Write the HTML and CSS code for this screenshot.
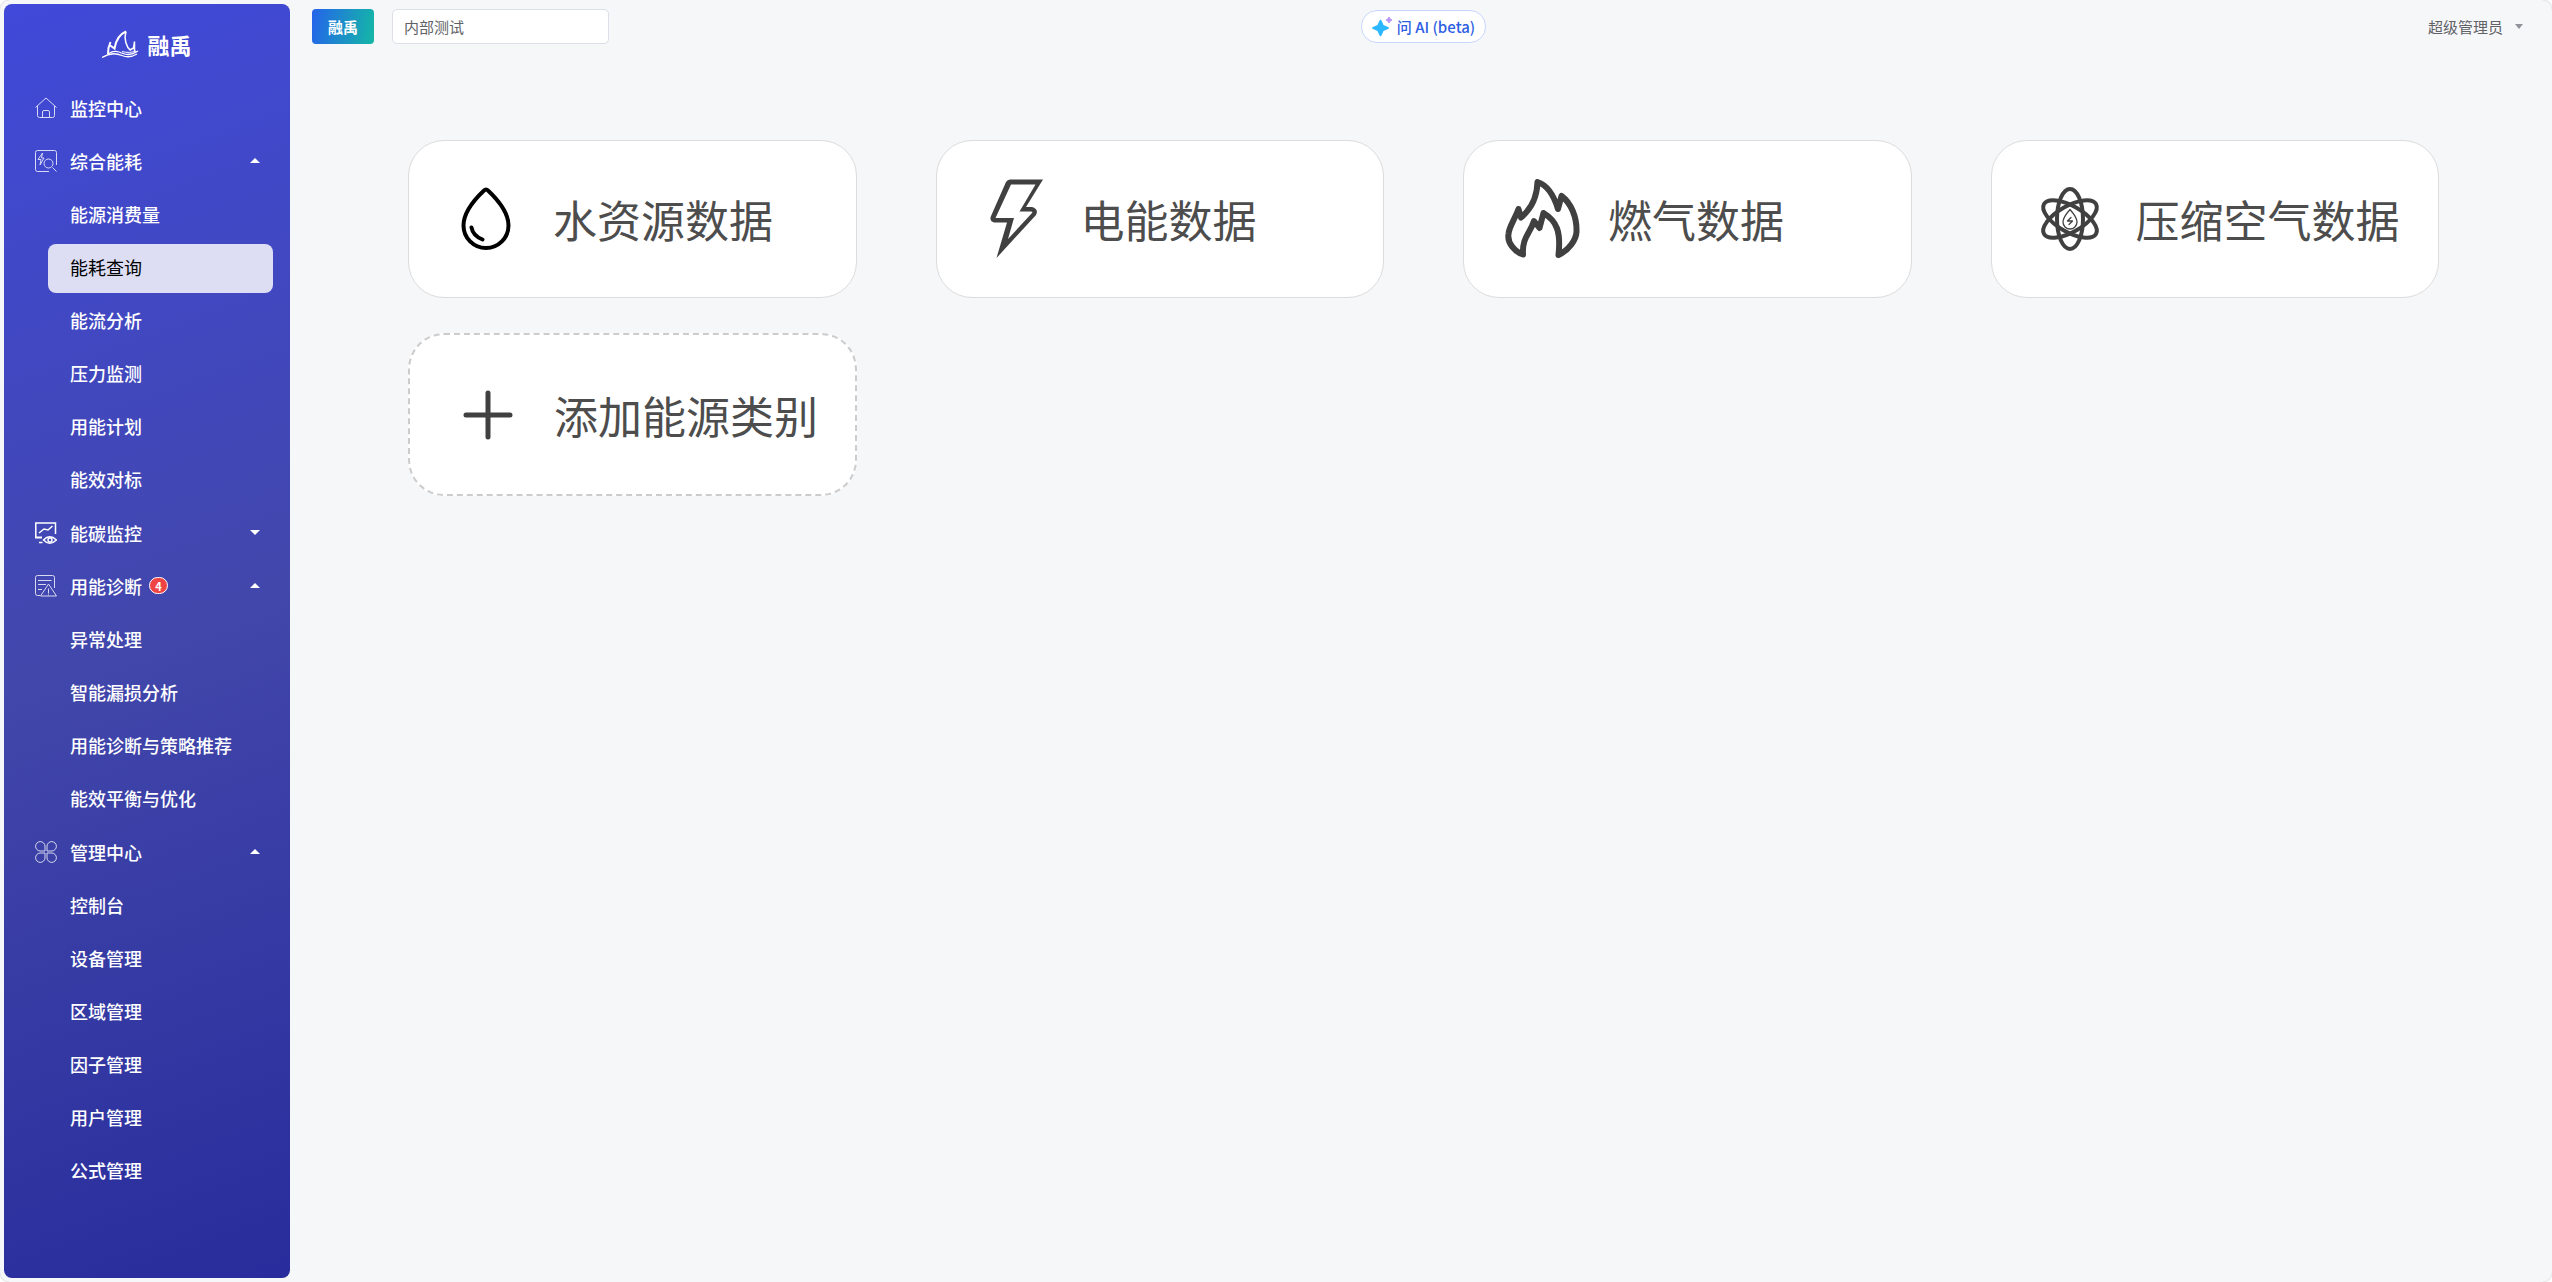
FILE: index.html
```html
<!DOCTYPE html>
<html lang="zh">
<head>
  <meta charset="UTF-8">
  <title>融禹</title>
  <link rel="stylesheet" href="styles.css">
</head>
<body>

<div class="app">
  <aside class="sidebar">
    <div class="logo">
      <svg width="38" height="28" viewBox="0 0 38 28" fill="none" stroke="#fff">
        <path d="M6 24L6.500 18L8.500 12M7.500 15L12.500 18.500C14 9.500 18 4 24 1.500" stroke-width="2"/>
        <path d="M24 1.500C21.500 9 24.500 17 28.500 20.500M28 20L31.500 18L32.500 11.500V21" stroke-width="1.500"/>
        <path d="M7 23.500C12 20 16 21.500 21 23.500S30 25 36 21" stroke-width="1.300"/>
        <path d="M0 27.500C7 23 14 23 20 25.500S30 27 35 24" stroke-width="1.300"/>
        <path d="M20 21.500C25 23 30 22.500 34 21" stroke-width="1"/>
      </svg>
      <span>融禹</span>
    </div>

    <nav class="menu">
      <a class="item" href="#">
        <svg class="icon thin" viewBox="0 0 22 22"><path d="M0.500 10.500L11 1L21.500 10.500M2.500 9V18.500Q2.500 20.500 4.500 20.500H17.500Q19.500 20.500 19.500 18.500V9M7.500 20.500V15Q7.500 13.500 9 13.500H13Q14.500 13.500 14.500 15V20.500"/></svg>
        <span>监控中心</span>
      </a>

      <button class="item">
        <svg class="icon thin" viewBox="0 0 22 22"><path d="M14 21.500H2.500Q.5 21.500 .5 19.500V2.500Q.5 .5 2.500 .5H19.500Q21.500 .5 21.500 2.500V15M7.500 3L3 9.500H6L5 15L9 8H6.500ZM17.500 17.500L21.500 21.500"/><circle cx="13.500" cy="13.500" r="4.500"/></svg>
        <span>综合能耗</span>
        <i class="caret up"></i>
      </button>
      <div class="submenu">
        <a href="#">能源消费量</a>
        <a class="active" href="#">能耗查询</a>
        <a href="#">能流分析</a>
        <a href="#">压力监测</a>
        <a href="#">用能计划</a>
        <a href="#">能效对标</a>
      </div>

      <button class="item">
        <svg class="icon" viewBox="0 0 22 22"><path d="M20.500 12V1H.8V15.500M4 11L9 7L13 8L17.500 4M4 20.500H7.500"/><path d="M0 15.500H7" stroke-width="2"/><path d="M8.500 18Q14.500 11.500 21.500 18Q14.500 24.500 8.500 18Z"/><circle cx="15" cy="18" r="2"/></svg>
        <span>能碳监控</span>
        <i class="caret down"></i>
      </button>

      <button class="item">
        <svg class="icon thin" viewBox="0 0 22 22"><path d="M5 20.500H2.500Q.5 20.500 .5 18.500V2.500Q.5 .5 2.500 .5H17.500Q19.500 .5 19.500 2.500V13M3 5.500H16.500M3 9.500H11M3 14.500H7M5.500 21L13.500 9L21.500 21ZM13.500 13.500V18.500M13.500 19.500V20.500"/></svg>
        <span>用能诊断</span>
        <em class="count">4</em>
        <i class="caret up"></i>
      </button>
      <div class="submenu">
        <a href="#">异常处理</a>
        <a href="#">智能漏损分析</a>
        <a href="#">用能诊断与策略推荐</a>
        <a href="#">能效平衡与优化</a>
      </div>

      <button class="item">
        <svg class="icon thin" viewBox="0 0 22 22"><path d="M10 10H5A4.700 4.700 0 1 1 10 5ZM12 10V5A4.700 4.700 0 1 1 17 10ZM10 12V17A4.700 4.700 0 1 1 5 12ZM12 12H17A4.700 4.700 0 1 1 12 17Z"/></svg>
        <span>管理中心</span>
        <i class="caret up"></i>
      </button>
      <div class="submenu">
        <a href="#">控制台</a>
        <a href="#">设备管理</a>
        <a href="#">区域管理</a>
        <a href="#">因子管理</a>
        <a href="#">用户管理</a>
        <a href="#">公式管理</a>
      </div>
    </nav>
  </aside>

  <main class="main">
    <header class="header">
      <div class="header-left">
        <span class="brand">融禹</span>
        <input class="project" type="text" value="内部测试" aria-label="项目">
      </div>
      <button class="ask-ai">
        <svg width="20" height="20" viewBox="0 0 20 20">
          <path d="M7.500 3.500Q8.500 2 9.500 3.500L11.500 8L16 10Q18 11 16 12L11.500 14L9.500 18.500Q8.500 20 7.500 18.500L5.500 14L1 12Q-1 11 1 10L5.500 8Z" fill="#2db7ff"/>
          <path d="M17 0L18 2L20 3L18 4L17 6L16 4L14 3L16 2Z" fill="#b794f6" stroke="#b794f6"/>
        </svg>
        <span>问 AI (beta)</span>
      </button>
      <button class="user">
        <span>超级管理员</span>
        <i class="caret down"></i>
      </button>
    </header>

    <section class="cards">
      <a class="card" href="#">
        <svg class="card-icon drop" viewBox="0 0 80 80"><path d="M37 11.500Q39 9.500 41 11.500C50 20 61.500 33 61.500 46.500A22.500 22.500 0 0 1 16.500 46.500C16.500 33 28 20 37 11.500ZM24.500 48.500C25.500 54 29 58 35.500 60.500" stroke-width="4"/></svg>
        <span>水资源数据</span>
      </a>
      <a class="card" href="#">
        <svg class="card-icon" viewBox="-1 0 80 80"><path class="fill" fill-rule="evenodd" d="M34 .5H67L50 28H56Q63 30 60 36L20.500 79L31 43.500H18Q13 42 15 37L30 3Q31.500 .5 34 .5ZM35 5.500L19.500 39H38L32 60L56 34Q57 32.500 55 32.500H43.500L59.500 5.500Z"/></svg>
        <span>电能数据</span>
      </a>
      <a class="card" href="#">
        <svg class="card-icon" viewBox="1 1 80 80"><path d="M36.500 4C36 20 29 32 20 39.500L17.500 31C13 43 8 49 7.500 56C6 65 14 74 22 76.500C21 59 29 56 33 43L38.500 50L42.500 35C56 43 60 54 57.500 77C68 72 75 62 75.500 54C76 39 70 25 60.500 18L57 31C53 18 46 7 36.500 4Z" stroke-width="6"/></svg>
        <span>燃气数据</span>
      </a>
      <a class="card" href="#">
        <svg class="card-icon" viewBox="0 0 80 80"><g stroke-width="4"><ellipse cx="40" cy="40" rx="13" ry="30"/><ellipse cx="40" cy="40" rx="13" ry="30" transform="rotate(60 40 40)"/><ellipse cx="40" cy="40" rx="13" ry="30" transform="rotate(120 40 40)"/></g><path stroke-width="1.300" d="M40 30.500C36 35 33 39 33 43A7 7 0 0 0 47 43C47 39 44 35 40 30.500Z"/><path stroke-width="1.300" d="M41 38.500L37.500 42H42.500L39 45.500"/></svg>
        <span>压缩空气数据</span>
      </a>
      <button class="card add">
        <svg class="card-icon" viewBox="0 0 80 80"><path d="M40 18V62M18 40H62" stroke-width="5"/></svg>
        <span>添加能源类别</span>
      </button>
    </section>
  </main>
</div>

</body>
</html>
```
FILE: styles.css
```css
* {
  box-sizing: border-box;
}
body {
  margin: 0;
  background: #fff;
  font-family: "Noto Sans CJK SC", sans-serif;
  color: #606266;
}
a {
  color: inherit;
  text-decoration: none;
}
button {
  border: none;
  background: none;
  font-family: inherit;
  color: inherit;
  cursor: pointer;
}
.app {
  display: flex;
  min-height: 100vh;
  padding: 4px 0 4px 4px;
  background: #f6f7f9;
  border-radius: 10px;
  box-shadow: 0 0 2px rgba(0, 0, 0, 0.3);
}

/* sidebar */
.sidebar {
  width: 286px;
  flex-shrink: 0;
  border-radius: 8px;
  background: linear-gradient(160deg, #4049d9 0%, #4247ab 50%, #282c9c 100%);
  color: #fff;
}
.logo {
  display: flex;
  align-items: center;
  justify-content: center;
  gap: 7px;
  height: 80px;
  font-size: 22px;
  font-weight: 700;
}
.menu {
  display: flex;
  flex-direction: column;
  gap: 4px;
  padding: 0 17px 0 31px;
  font-size: 18px;
  font-weight: 500;
}
.item {
  display: flex;
  align-items: center;
  height: 49px;
  padding: 0 13px 2px 0;
  font-size: 18px;
  font-weight: 500;
}
.icon {
  width: 22px;
  height: 22px;
  margin-right: 13px;
  fill: none;
  stroke: #fff;
  stroke-width: 1.5;
}
.icon.thin {
  stroke-width: 1;
  opacity: 0.8;
}
.caret {
  border: 5px solid transparent;
}
.item .caret {
  margin-left: auto;
}
.caret.up {
  border-top: none;
  border-bottom-color: currentColor;
}
.caret.down {
  border-bottom: none;
  border-top-color: currentColor;
}
.count {
  display: flex;
  align-items: center;
  justify-content: center;
  width: 19px;
  height: 17px;
  margin-left: 7px;
  border: 1px solid #fff;
  border-radius: 9px;
  background: #ef4444;
  font-size: 11px;
  font-style: normal;
  font-weight: 700;
}
.submenu {
  display: flex;
  flex-direction: column;
  gap: 4px;
  margin-top: 1px;
  padding-left: 13px;
}
.submenu a {
  height: 49px;
  padding-left: 22px;
  border-radius: 8px;
  line-height: 47px;
}
.submenu .active {
  background: #dddef3;
  color: #000;
  font-weight: 400;
}

/* top bar */
.main {
  flex: 1;
}
.header {
  display: grid;
  grid-template-columns: 1fr auto 1fr;
  align-items: center;
  height: 45px;
  padding: 0 17px 0 22px;
  font-size: 15px;
}
.header-left {
  display: flex;
  align-items: center;
  gap: 18px;
}
.brand {
  padding: 0 16px;
  border-radius: 4px;
  background: linear-gradient(100deg, #2563eb, #14b8a6);
  color: #fff;
  font-weight: 700;
  line-height: 35px;
}
.project {
  width: 217px;
  height: 35px;
  padding: 0 11px;
  border: 1px solid #dcdfe6;
  border-radius: 5px;
  background: #fff;
  font-family: inherit;
  font-size: 15px;
  color: #606266;
}
.ask-ai {
  display: flex;
  align-items: center;
  gap: 5px;
  height: 33px;
  padding: 0 10px;
  border: 1px solid #c7d7fe;
  border-radius: 16px;
  background: #fff;
  font-size: 15px;
  font-weight: 500;
  color: #2f5fe3;
}
.user {
  display: flex;
  align-items: center;
  justify-self: end;
  gap: 12px;
  padding: 0 12px;
  font-size: 15px;
}
.user .caret {
  border-width: 4px;
  border-bottom: none;
  border-top: 5px solid #909399;
}

/* energy categories */
.cards {
  display: grid;
  grid-template-columns: repeat(4, 1fr);
  align-items: start;
  gap: 35px 79px;
  padding: 91px 113px 0 118px;
}
.card {
  display: flex;
  align-items: center;
  gap: 26px;
  height: 158px;
  padding: 0 0 0 38px;
  border: 1px solid #dcdcdc;
  border-radius: 36px;
  background: #fff;
  font-size: 44px;
  color: #4d4d4d;
  white-space: nowrap;
}
.card.add {
  height: 163px;
  border: 2px dashed #ccc;
}
.card-icon {
  width: 80px;
  height: 80px;
  flex-shrink: 0;
  fill: none;
  stroke: #404040;
  stroke-linecap: round;
  stroke-linejoin: round;
}
.card-icon.drop {
  stroke: #000;
}
.card-icon .fill {
  fill: #404040;
  stroke: none;
}
```
